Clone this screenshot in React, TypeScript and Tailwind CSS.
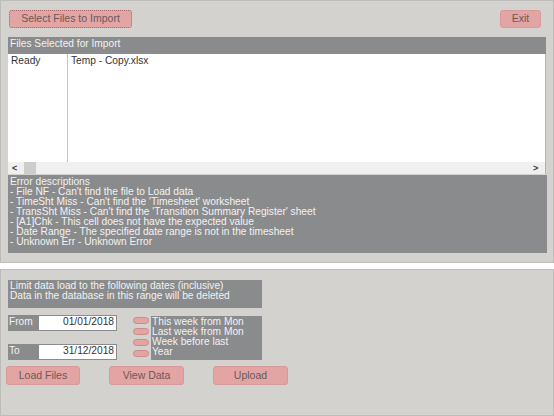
const FONT = "font-['Liberation_Sans',Arial,sans-serif]";

const ERRORS = [
  'Error descriptions',
  "- File NF - Can't find the file to Load data",
  "- TimeSht Miss - Can't find the 'Timesheet' worksheet",
  "- TransSht Miss - Can't find the 'Transition Summary Register' sheet",
  '- [A1]Chk - This cell does not have the expected value',
  '- Date Range - The specified date range is not in the timesheet',
  '- Unknown Err - Unknown Error',
];

const RANGES = ['This week from Mon', 'Last week from Mon', 'Week before last', 'Year'];

function PinkButton({ label, className = '' }: { label: string; className?: string }) {
  return (
    <button
      className={`flex items-center justify-center rounded-[3px] border border-[#d69a9a] bg-[#e3a4a4] text-[10.5px] text-[#6a5a5a] ${className}`}
    >
      {label}
    </button>
  );
}

function DateRow({ label, value }: { label: string; value: string }) {
  return (
    <div className="flex h-[16px] w-[109px] bg-[#8a8b8d]">
      <span className="w-[31px] pl-[1px] pt-[2px] leading-[10px] text-[#f2f2f2]">{label}</span>
      <div className="my-[1px] mr-[1px] flex-1 bg-white pr-[2px] pt-[1px] text-right leading-[10px] text-[#333]">
        {value}
      </div>
    </div>
  );
}

function FilesPanel() {
  return (
    <div className="flex h-[263px] flex-col border border-[#bebcb9] bg-[#d4d2cf] pl-[7px]">
      {/* Top buttons */}
      <div className="mt-[9px] flex h-[18px] justify-between pr-[12px]">
        <button className="ml-[1px] flex w-[123px] items-center justify-center rounded-[3px] border border-dotted border-[#a86868] bg-[#e3a4a4] text-[10.5px] text-[#6a5a5a]">
          Select Files to Import
        </button>
        <PinkButton label="Exit" className="w-[41px]" />
      </div>

      {/* List header */}
      <div className="mt-[9px] h-[17px] w-[538px] bg-[#8a8b8d] pl-[2px] pt-[2px] leading-[10px] text-[#f2f2f2]">
        Files Selected for Import
      </div>

      {/* List body */}
      <div className="flex h-[108px] w-[538px] border-r border-[#b4b4b4] bg-white text-[#333]">
        <div className="w-[60px] border-r border-[#c8c8c8] pl-[3px] pt-[2px] leading-[10px]">Ready</div>
        <div className="pl-[3px] pt-[2px] leading-[10px]">Temp - Copy.xlsx</div>
      </div>

      {/* Horizontal scrollbar */}
      <div className="flex h-[12px] w-[538px] items-center border-r border-[#b4b4b4] bg-[#f0f0f0] text-[#333]">
        <span className="w-[16px] pl-[4px] text-[9px] font-bold leading-[10px]">&lt;</span>
        <div className="h-full w-[12px] bg-[#cdcdcd]" />
        <div className="flex-1" />
        <span className="w-[12px] text-[9px] font-bold leading-[10px]">&gt;</span>
      </div>

      {/* Error descriptions */}
      <div className="mt-[1px] h-[78px] w-[539px] bg-[#8a8b8d] pl-[2px] pt-[2px] leading-[10px] text-[#f2f2f2]">
        {ERRORS.map((line) => (
          <div key={line}>{line}</div>
        ))}
      </div>
    </div>
  );
}

function LoadPanel() {
  return (
    <div className="mt-[6px] flex h-[147px] flex-col border border-[#bebcb9] bg-[#d4d2cf] pl-[7px]">
      <div className="mt-[10px] h-[28px] w-[254px] bg-[#8a8b8d] pl-[2px] pt-[1px] leading-[10px] text-[#f2f2f2]">
        <div>Limit data load to the following dates (inclusive)</div>
        <div>Data in the database in this range will be deleted</div>
      </div>

      <div className="mt-[7px] flex h-[45px]">
        <div className="flex flex-col gap-[13px]">
          <DateRow label="From" value="01/01/2018" />
          <DateRow label="To" value="31/12/2018" />
        </div>

        <div className="ml-[16px] flex flex-col gap-[4px] pt-[2px]">
          {RANGES.map((r) => (
            <div
              key={r}
              className="h-[7px] w-[16px] rounded-full border border-[#c98a8a] bg-[#e3a4a4]"
            />
          ))}
        </div>

        <div className="ml-[2px] mt-[1px] h-[44px] w-[111px] bg-[#8a8b8d] pl-[1px] pt-[1px] leading-[10px] text-[#f2f2f2]">
          {RANGES.map((r) => (
            <div key={r}>{r}</div>
          ))}
        </div>
      </div>

      <div className="ml-[-2px] mt-[6px] flex h-[19px]">
        <PinkButton label="Load Files" className="w-[74px]" />
        <PinkButton label="View Data" className="ml-[29px] w-[75px]" />
        <PinkButton label="Upload" className="ml-[29px] w-[75px]" />
      </div>
    </div>
  );
}

export default function App() {
  return (
    <div className={`h-[416px] w-[554px] overflow-hidden bg-white text-[10.2px] ${FONT}`}>
      <FilesPanel />
      <LoadPanel />
    </div>
  );
}
